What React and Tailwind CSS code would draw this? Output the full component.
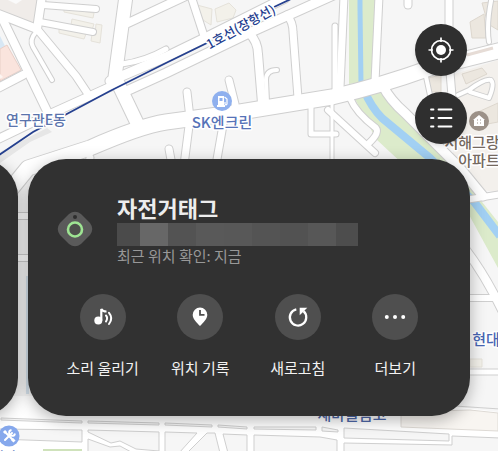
import React from 'react';

const roads = [
  { d: 'M42 -4 L37 29', w: 8 },
  { d: 'M-4 13 L37 29', w: 8 },
  { d: 'M43 5 L96 9', w: 6 },
  { d: 'M40 22 L93 32', w: 6 },
  { d: 'M36 32 Q29 40 33 47 L52 80', w: 4 },
  { d: 'M37 29 L76 76 L88 94', w: 7 },
  { d: 'M2 18 L48 113', w: 8 },
  { d: 'M-4 89 L23 75', w: 8 },
  { d: 'M-4 140 L48 115 L112 86', w: 8 },
  { d: 'M126 -4 L115 77 L138 125', w: 13 },
  { d: 'M128 23 L190 -6', w: 8 },
  { d: 'M122 64 Q145 61 166 49', w: 5 },
  { d: 'M110 81 L166 57 L205 38 L285 -2', w: 9 },
  { d: 'M122 93 L166 73 L249 33 L340 -8', w: 9 },
  { d: 'M191 -4 L204 36', w: 7 },
  { d: 'M249 33 Q258 42 258 54 L262 103', w: 8 },
  { d: 'M287 15 Q293 22 293 32 L298 98', w: 7 },
  { d: 'M267 102 L266 80 Q266 70 277 70', w: 4 },
  { d: 'M229 80 L236 108', w: 7 },
  { d: 'M187 92 L190 118 L184 165', w: 7 },
  { d: 'M223 125 L216 165', w: 7 },
  { d: 'M311 103 L311 134 L336 134', w: 5 },
  { d: 'M332 98 L332 165', w: 3 },
  { d: 'M169 149 L172 165', w: 7 },
  { d: 'M335 26 L335 90', w: 5 },
  { d: 'M344 -4 L340 88', w: 7 },
  { d: 'M379 -4 L375 82', w: 7 },
  { d: 'M408 -4 L408 5', w: 7 },
  { d: 'M449 -4 L449 60 L453 108', w: 7 },
  { d: 'M489 42 Q486 24 492 -4', w: 4 },
  { d: 'M425 72 L431 100', w: 4 },
  { d: 'M458 95 L469 90 Q485 78 491 80 Q495 84 489 98 L470 92', w: 4 },
  { d: 'M350 98 Q356 113 376 128 Q380 133 368 144', w: 6 },
  { d: 'M328 110 L375 153', w: 6 },
  { d: 'M383 86 Q390 100 405 113 L460 168 L483 196', w: 9 },
  { d: 'M465 200 L502 194', w: 6 },
  { d: 'M466 250 Q485 275 502 310', w: 8 },
  { d: 'M466 298 L493 298', w: 6 },
  { d: 'M466 372 L502 372', w: 5 },
  { d: 'M90 158 L88 168', w: 7 },
  { d: 'M10 190 L28 168 L90 148 Q140 126 166 122 L240 112 L332 97 Q380 86 430 68 L502 50', w: 15 },
  { d: 'M10 216 L34 216', w: 6 },
  { d: 'M10 258 L34 258', w: 6 },
];

const buildings = [
  '64,8 94,13 93,18 64,12',
  '72,19 94,24 92,30 71,25',
  '59,28 86,34 84,39 59,33',
  '96,24 102,25 100,43 91,41 92,34 95,34',
  '197,5 212,9 211,25 203,20',
  '215,9 229,3 236,10 233,18 217,22',
  '470,359 482,359 482,367 470,367',
];

const apartments = [
  '470,22 484,14 486,38 472,38',
  '482,3 498,1 498,30 488,24',
  '462,74 482,68 487,74 466,84',
  '478,112 498,103 498,122 482,125',
  '428,78 441,75 441,92 430,92',
];

const blocks = [
  '1,418 82,421 82,423 1,420',
  '88,421 159,423 159,425 88,423',
  '165,423 212,425 212,427 165,425',
  '218,425 247,427 247,429 218,427',
  '254,427 316,427 316,430 254,429',
  '322,427 338,430 338,432 322,431',
  '-2,429 82,430 82,442 -2,439',
  '88,430 159,432 159,451 136,449 120,441 111,443 88,432',
  '88,439 110,447 120,446 133,453 88,453',
  '165,432 197,433 179,453 165,453',
  '207,433 215,433 220,453 187,453',
  '223,434 247,435 247,453 228,453',
  '254,435 320,437 337,440 337,453 254,453',
  '344,428 449,434 449,441 344,438',
  '344,443 452,445 452,436 500,438 500,453 344,453',
];

function MapBackground() {
  return (
    <svg
      className="absolute inset-0 h-full w-full font-['Noto_Sans_CJK_KR','Noto_Sans',sans-serif]"
      viewBox="0 0 498 451"
      preserveAspectRatio="xMidYMid slice"
      role="img"
      aria-label="지도"
    >
      <rect width="498" height="451" fill="#f6f6f6" />
      <path d="M0 0H41L35 26L0 12Z" fill="#f0ece9" />
      <path d="M8 0L16 4L22 0Z" fill="#fafafa" />
      <path d="M0 36L5 46L0 49Z" fill="#d8e7f4" />
      <path d="M0 49L7 45L21 70L0 81Z" fill="#fae4dd" stroke="#e8cfc8" strokeWidth="1" />
      <path d="M0 74L3 77L0 79Z" fill="#fdf5f1" />
      <path d="M0 152L47 128L52 132L30 142L0 163Z" fill="#e6e6e6" />
      <path d="M455 74L498 60V192L480 190L453 155Z" fill="#f3f0ec" />
      <path d="M349 0H376L372 81L349 84Z" fill="#dcebcb" />
      <path d="M354 97L380 88L389 104L455 168L498 222V268L468 213L420 180L376 139Z" fill="#dcebcb" />
      <path d="M360 -2V8L361 84" stroke="#a2d0f3" strokeWidth="5" fill="none" />
      <path d="M364 90Q371 107 382 118L430 158L475 203L500 236" stroke="#a2d0f3" strokeWidth="8" fill="none" />

      {buildings.map((p) => (
        <polygon key={p} points={p} fill="#f3f1ea" stroke="#e5e2da" strokeWidth="1" />
      ))}
      {apartments.map((p) => (
        <polygon key={p} points={p} fill="#ece7df" stroke="#ddd7ce" strokeWidth="1" />
      ))}

      <g fill="none" stroke="#cfcfcf" strokeLinecap="round" strokeLinejoin="round">
        {roads.map((r) => <path key={r.d} d={r.d} strokeWidth={r.w + 2} />)}
      </g>
      <g fill="none" stroke="#ffffff" strokeLinecap="round" strokeLinejoin="round">
        {roads.map((r) => <path key={r.d} d={r.d} strokeWidth={r.w} />)}
      </g>
      <path d="M467 55L493 48" stroke="#e6dcd6" strokeWidth="3" />
      <path d="M26 276H29V394H26Z" fill="#d5e2ec" />

      <path d="M0 396H28L400 400L498 412V451H0Z" fill="#ffffff" />
      <path d="M401 412L470 410L498 413V431L401 427Z" fill="#f8f5f1" stroke="#dedad5" strokeWidth="1" />
      <path d="M455 406L500 409" stroke="#cfcfcf" strokeWidth="1" />
      {blocks.map((p) => (
        <polygon key={p} points={p} fill="#f6f6f6" stroke="#cfcfcf" strokeWidth="1" />
      ))}
      <path d="M43 449H82V451H43Z" fill="#cfe2bb" />

      <path d="M-1 155L33 132L110 91L166 63L207 43M274 7L291 -1" fill="none" stroke="#25408f" strokeWidth="1.8" />

      <g stroke="#ffffff" strokeWidth="3" strokeLinejoin="round" paintOrder="stroke" fontWeight="500" textAnchor="middle">
        <text transform="translate(243 31) rotate(-29)" fontSize="13" fill="#25408f">1호선(장항선)</text>
        <text x="36" y="125" fontSize="14" fill="#5b74ac">연구관E동</text>
        <text x="222" y="128" fontSize="15" fill="#5673b8">SK엔크린</text>
        <text x="472" y="148" fontSize="15" fill="#75695f">서해그랑</text>
        <text x="479" y="166" fontSize="15" fill="#75695f">아파트</text>
        <text x="486" y="345" fontSize="15" fill="#4866b4">현대</text>
        <text x="352" y="420" fontSize="15" fill="#4c66a6">새마을금고</text>
        <text x="10" y="461" fontSize="13" fill="#5673b8">서비스</text>
      </g>

      {/* gas station */}
      <circle cx="222" cy="101" r="10" fill="#8fb0ee" />
      <path d="M218 96H224V105H225V107H217V105H218Z" fill="#ffffff" />
      <rect x="219.500" y="98" width="3" height="3" fill="#8fb0ee" />
      <path d="M224.500 97L227 99V104Q226 106 225 104V102" fill="none" stroke="#ffffff" strokeWidth="1.200" />
      {/* apartment */}
      <circle cx="479" cy="121" r="10" fill="#9c9188" />
      <path d="M479 115L485 120H484V126H474V120H473Z" fill="#ffffff" />
      <path d="M477 120H478M480 120H481M477 123H478M480 123H481" stroke="#9c9188" strokeWidth="1" />
      {/* repair shop */}
      <circle cx="9" cy="436" r="10.500" fill="#86a8ec" />
      <path d="M6 433L13 440M5 440L12 433" stroke="#ffffff" strokeWidth="2" strokeLinecap="round" />
      <path d="M11.500 430A3 3 0 1 0 15 433.500" fill="none" stroke="#ffffff" strokeWidth="1.800" />
      <path d="M4 431L6 433M12 439L14.500 441.500" stroke="#ffffff" strokeWidth="3" />
    </svg>
  );
}

function TagIcon() {
  return (
    <svg className="h-9 w-9 shrink-0" viewBox="0 0 36 36" fill="none" aria-hidden="true">
      <path d="M12 3Q18 -1.500 24 3L33 12Q37.500 18 33 24L24 33Q18 37.500 12 33L3 24Q-1.500 18 3 12Z" fill="#5a5a5a" />
      <circle cx="18" cy="6" r="2" fill="#2d2d2d" />
      <circle cx="18" cy="18.500" r="7" fill="#4d4f4c" stroke="#9ee493" strokeWidth="2.600" />
    </svg>
  );
}

const SoundIcon = () => (
  <svg className="h-6 w-6" viewBox="0 0 24 24" fill="none" stroke="#ffffff" aria-hidden="true">
    <circle cx="7.300" cy="15.600" r="4" fill="#ffffff" stroke="none" />
    <path d="M10.300 15.500V4Q11.500 6.500 15.500 6.500" strokeWidth="2.200" />
    <path d="M15 10.500Q17.200 13 15 16.500" strokeWidth="2" strokeLinecap="round" />
    <path d="M18 7.800Q22.500 13 18 19" strokeWidth="2" strokeLinecap="round" />
  </svg>
);

const HistoryIcon = () => (
  <svg className="h-6 w-6" viewBox="0 0 24 24" fill="none" aria-hidden="true">
    <path d="M12 2.500A7.300 7.300 0 0 0 4.700 9.800C4.700 14 8.500 17.500 12 21C15.500 17.500 19.300 14 19.300 9.800A7.300 7.300 0 0 0 12 2.500Z" fill="#ffffff" />
    <path d="M12 5V9.800H16.500" stroke="#4f4f4f" strokeWidth="1.800" />
  </svg>
);

const RefreshIcon = () => (
  <svg className="h-6 w-6" viewBox="0 0 24 24" fill="none" aria-hidden="true">
    <path d="M10.300 4.300A8.200 8.200 0 1 0 17.500 6.200" stroke="#ffffff" strokeWidth="2.300" />
    <path d="M13.700 2.700H21.300L13.700 10.200Z" fill="#ffffff" />
  </svg>
);

const MoreIcon = () => (
  <svg className="h-6 w-6" viewBox="0 0 24 24" fill="#ffffff" aria-hidden="true">
    <circle cx="3.800" cy="12" r="2" />
    <circle cx="12" cy="12" r="2" />
    <circle cx="20.200" cy="12" r="2" />
  </svg>
);

const actions = [
  { label: '소리 울리기', icon: SoundIcon },
  { label: '위치 기록', icon: HistoryIcon },
  { label: '새로고침', icon: RefreshIcon },
  { label: '더보기', icon: MoreIcon },
];

// blurred-out address, one shade per cell
const mosaic = [
  'w-[23px] bg-[#4b4b4b]',
  'w-7 bg-[#676767]',
  'w-7 bg-[#535353]',
  'w-7 bg-[#595959]',
  'w-7 bg-[#585858]',
  'w-7 bg-[#545454]',
  'w-7 bg-[#525252]',
  'w-7 bg-[#575757]',
  'w-[22px] bg-[#4d4d4d]',
];

function MapButton({ label, children }) {
  return (
    <button type="button" aria-label={label} className="flex h-13 w-13 cursor-pointer items-center justify-center rounded-full bg-[#2f2f2f] shadow-md">
      {children}
    </button>
  );
}

function TagCard() {
  return (
    <section className="w-full shrink-0 rounded-[38px] bg-[#313131] px-[26px] pt-8 pb-9 shadow-[0_4px_16px_rgba(0,0,0,0.3)]">
      <div className="flex items-center">
        <div className="flex w-[63px] shrink-0 pl-[3px]">
          <TagIcon />
        </div>
        <div className="min-w-0 flex-1">
          <h1 className="text-[22px] leading-8 font-bold text-[#ededed]">자전거태그</h1>
          <div className="flex h-[23px]">
            {mosaic.map((shade, i) => (
              <span key={i} className={shade} />
            ))}
          </div>
          <p className="text-[15px] leading-5 text-[#989898]">최근 위치 확인: 지금</p>
        </div>
      </div>
      <div className="mt-7 grid grid-cols-4">
        {actions.map(({ label, icon: Icon }) => (
          <button key={label} type="button" className="flex cursor-pointer flex-col items-center gap-4">
            <span className="flex h-[46px] w-[46px] items-center justify-center rounded-full bg-[#4f4f4f]">
              <Icon />
            </span>
            <span className="text-[15px] leading-6 whitespace-nowrap text-[#f2f2f2]">{label}</span>
          </button>
        ))}
      </div>
    </section>
  );
}

export default function App() {
  return (
    <main className="relative min-h-screen overflow-hidden bg-[#f6f6f6] font-['Noto_Sans_CJK_KR','Noto_Sans',sans-serif]">
      <MapBackground />
      <div className="relative flex flex-col gap-[15px]">
        <div className="flex flex-col items-end gap-4 pt-6 pr-[31px]">
          <MapButton label="현재 위치">
            <svg className="h-7 w-7" viewBox="0 0 28 28" fill="none" stroke="#ffffff" aria-hidden="true">
              <circle cx="14" cy="14" r="9.500" strokeWidth="1.700" />
              <circle cx="14" cy="14" r="5" fill="#ffffff" stroke="none" />
              <path d="M14 1.500V6M14 22V26.500M1.500 14H6M22 14H26.500" strokeWidth="1.700" />
            </svg>
          </MapButton>
          <MapButton label="목록">
            <svg className="h-6 w-6" viewBox="0 0 24 24" fill="none" stroke="#ffffff" strokeWidth="1.800" strokeLinecap="round" aria-hidden="true">
              <path d="M2 3.500H4.500M9.500 3.500H22.500M2 12H4.500M9.500 12H22.500M2 20.500H4.500M9.500 20.500H22.500" />
            </svg>
          </MapButton>
        </div>
        <div className="flex gap-[10px] px-7">
          <div className="-ml-[calc(100%+10px)] w-full shrink-0 rounded-[38px] bg-[#313131] shadow-[0_4px_16px_rgba(0,0,0,0.3)]" />
          <TagCard />
        </div>
      </div>
    </main>
  );
}
